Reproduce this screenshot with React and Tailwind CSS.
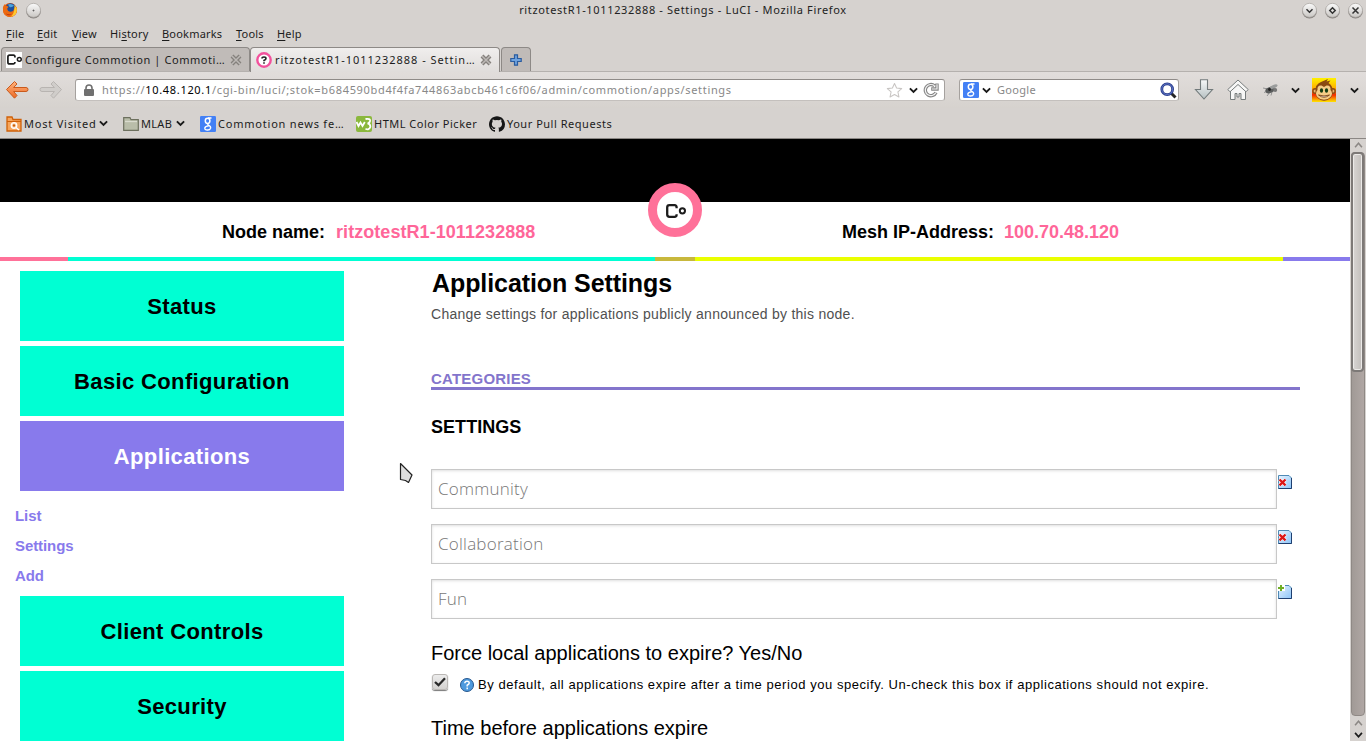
import React from 'react';

const Chevron = ({ className = 'h-[7px] w-[9px]' }) => (
  <svg viewBox="0 0 10 7" className={`shrink-0 ${className}`} fill="none" stroke="#1a1a1a" strokeWidth="2.1">
    <path d="M1 1.2 L5 5.2 L9 1.2" />
  </svg>
);

const WindowButton = ({ children }) => (
  <svg viewBox="0 0 17 17" className="h-[17px] w-[17px] shrink-0">
    <circle cx="8.5" cy="9" r="7.4" fill="#85817e" />
    <circle cx="8.5" cy="8.3" r="7" fill="url(#btn)" stroke="#aaa6a2" strokeWidth=".7" />
    <g fill="none" stroke="#333" strokeWidth="1.5">{children}</g>
  </svg>
);

const Defs = () => (
  <svg className="absolute h-0 w-0">
    <defs>
      <linearGradient id="btn" x1="0" y1="0" x2="0" y2="1">
        <stop offset="0" stopColor="#fafafa" />
        <stop offset="1" stopColor="#cac7c4" />
      </linearGradient>
      <linearGradient id="orange" x1="0" y1="0" x2="0" y2="1">
        <stop offset="0" stopColor="#ffb27c" />
        <stop offset="1" stopColor="#ee6a25" />
      </linearGradient>
      <linearGradient id="sheet" x1="0" y1="0" x2="1" y2="1">
        <stop offset="0" stopColor="#e8f4ff" />
        <stop offset="1" stopColor="#8cc4f8" />
      </linearGradient>
      <linearGradient id="sky" x1="0" y1="0" x2="0" y2="1">
        <stop offset="0" stopColor="#fff200" />
        <stop offset=".4" stopColor="#ffb400" />
        <stop offset=".7" stopColor="#f22a00" />
        <stop offset="1" stopColor="#ffe600" />
      </linearGradient>
      <linearGradient id="silver" x1="0" y1="0" x2="0" y2="1">
        <stop offset="0" stopColor="#f6f8f8" />
        <stop offset="1" stopColor="#b6c0c2" />
      </linearGradient>
    </defs>
  </svg>
);

const Firefox = () => (
  <svg viewBox="0 0 16 16" className="h-4 w-4 shrink-0">
    <circle cx="8" cy="8" r="7" fill="#e8590c" />
    <circle cx="8.6" cy="6.4" r="5.2" fill="#1d4f9c" />
    <path d="M6 2.5 Q9 1 12 3.5 Q10 6 7.5 5Z" fill="#4aa3dd" />
    <path d="M1 5 Q2 2.5 3 2 L3.6 4 Q5.5 3.6 6.6 4.8 L5.2 6.6 Q5.6 10 9 9.8 Q12 9 12.3 6.5 L14.8 5 Q16 11 11.5 14 Q6 16.5 2.5 12.5 Q.6 9.5 1 5Z" fill="#ec6a12" />
    <path d="M12.4 3 Q16.4 7 13.8 12 Q11.5 14.8 8.5 14.8 Q13 11.5 12.4 3Z" fill="#fdc92e" />
    <path d="M3.5 11 Q6 13.5 10 12 Q6 14.8 3.5 11Z" fill="#b3240c" />
  </svg>
);

const CommotionMark = ({ className }) => (
  <svg viewBox="0 0 20 14" className={className} fill="none" stroke="#1c1c1c">
    <path d="M10.6 4.3 V3.2 Q10.6 1.2 8.6 1.2 H3.5 Q1.2 1.2 1.2 3.5 V10.5 Q1.2 12.8 3.5 12.8 H8.6 Q10.6 12.8 10.6 10.8 V10.2" strokeWidth="2.3" />
    <circle cx="16.4" cy="6.8" r="2.6" strokeWidth="2" />
  </svg>
);

const TabClose = () => (
  <svg viewBox="0 0 12 12" className="h-3 w-3 shrink-0">
    <path d="M2 2 L10 10 M10 2 L2 10" stroke="#85817d" strokeWidth="4" />
    <path d="M2 2 L10 10 M10 2 L2 10" stroke="#bdb9b6" strokeWidth="1.5" />
  </svg>
);

const GoogleG = () => (
  <svg viewBox="0 0 16 16" className="h-4 w-4 shrink-0">
    <rect width="16" height="16" rx="1.2" fill="#4380f5" />
    <g fill="none" stroke="#fff" strokeWidth="1.5">
      <ellipse cx="7.6" cy="4.8" rx="2.3" ry="2.6" />
      <path d="M8 2 H11.5 M8.3 7.4 Q7 8.6 8.8 9.3 Q11 10.3 10.6 12.2 Q9.8 14.2 7.4 14 Q4.6 13.8 4.8 12 Q5.2 10 8.8 9.8" strokeWidth="1.3" />
    </g>
  </svg>
);

const MenuItem = ({ first, pre = '', rest, width }) => (
  <span className={`${width} shrink-0`}>
    {pre}
    <span className="underline underline-offset-2">{first}</span>
    {rest}
  </span>
);

const NavButton = ({ label, active }) => (
  <a className={`ml-5 flex h-[70px] w-[324px] items-center justify-center pt-[2px] text-[22px] font-bold tracking-[0.36px] ${active ? 'bg-[#887aec] text-white' : 'bg-[#00ffd3] text-black'}`}>
    {label}
  </a>
);

const RemoveIcon = () => (
  <svg viewBox="0 0 14 14" className="mt-[6px] h-[14px] w-[14px] shrink-0">
    <path d="M.5 .5 H11 L13.5 3 V13.5 H.5Z" fill="url(#sheet)" stroke="#4f8ab5" />
    <path d="M13.5 3 V13.5 H.5" fill="none" stroke="#1f3f70" />
    <path d="M1.5 4.5 L7.5 10.3 M7.5 4.5 L1.5 10.3" stroke="#fff" strokeWidth="3.6" />
    <path d="M1.5 4.5 L7.5 10.3 M7.5 4.5 L1.5 10.3" stroke="#dc1616" strokeWidth="2.4" />
  </svg>
);

const AddIcon = () => (
  <svg viewBox="0 0 14 14" className="mt-[6px] h-[14px] w-[14px] shrink-0">
    <path d="M.5 .5 H11 L13.5 3 V13.5 H.5Z" fill="url(#sheet)" stroke="#4f8ab5" />
    <path d="M13.5 3 V13.5 H.5" fill="none" stroke="#1f3f70" />
    <path d="M0 0 H7 V6 H0Z" fill="#fff" />
    <path d="M3 0 V6 M0 3 H6" stroke="#6fae24" strokeWidth="2" />
  </svg>
);

const Field = ({ value, icon }) => (
  <div className="mb-[15px] flex h-10 items-start gap-px">
    <div className="flex h-10 w-[846px] items-center border border-[#c8c8c8] pl-[6px] font-['Open_Sans',sans-serif] text-[17px] font-light tracking-[0.23px] text-[#777] shadow-[inset_0_1px_3px_rgba(0,0,0,0.13)]">
      {value}
    </div>
    {icon}
  </div>
);

const TitleBar = () => (
  <div className="grid h-5 grid-cols-[100px_1fr_100px] items-center text-[#222]">
    <div className="flex items-center gap-[7px] pl-[2px]">
      <Firefox />
      <WindowButton><circle cx="8.5" cy="8.5" r=".5" strokeWidth=".8" /></WindowButton>
    </div>
    <div className="pb-px text-center tracking-[0.66px]">ritzotestR1-1011232888 - Settings - LuCI - Mozilla Firefox</div>
    <div className="flex items-center justify-end gap-[6px] pr-[2px]">
      <WindowButton><path d="M5.5 7.2 L8.5 10.2 L11.5 7.2" /></WindowButton>
      <WindowButton><path d="M8.5 5.8 L11.2 8.5 L8.5 11.2 L5.8 8.5Z" /></WindowButton>
      <WindowButton><path d="M5.5 5.5 L11.5 11.5 M11.5 5.5 L5.5 11.5" /></WindowButton>
    </div>
  </div>
);

const Tabs = () => (
  <div className="flex h-[25px] items-end border-b border-[#b5b1ae] pl-px">
    <div className="flex h-6 w-[249px] items-center rounded-t-[4px] border border-b-0 border-[#8d8986] bg-[#c0bbb8] pl-[4px]">
      <span className="mr-[3px] flex h-4 w-4 items-center justify-center bg-white">
        <CommotionMark className="h-[11px] w-[15px]" />
      </span>
      <span className="w-[205px] shrink-0 tracking-[0.57px]">Configure Commotion | Commoti…</span>
      <TabClose />
    </div>
    <div className="-mb-px flex h-[25px] w-[250px] items-center rounded-t-[4px] border border-b-0 border-[#8d8986] bg-linear-to-b from-[#f0eeed] to-[#e0dddb] pl-[5px]">
      <svg viewBox="0 0 16 16" className="mr-[3px] h-4 w-4 shrink-0">
        <circle cx="8" cy="8" r="6.7" fill="#fff" stroke="#f2519c" strokeWidth="2.4" />
        <path d="M6 6.6 Q6 5 8 5 Q10 5 10 6.5 Q10 7.6 8 8.4 V9.2 M8 10.2 V11.8" fill="none" stroke="#222" strokeWidth="1.6" />
      </svg>
      <span className="w-[205px] shrink-0 tracking-[0.96px]">ritzotestR1-1011232888 - Settin…</span>
      <TabClose />
    </div>
    <div className="ml-px flex h-6 w-[30px] items-center justify-center rounded-t-[4px] border border-b-0 border-[#8d8986] bg-[#c0bbb8]">
      <svg viewBox="0 0 12 12" className="h-3 w-3">
        <path d="M4.5 .8 H7.5 V4.5 H11.2 V7.5 H7.5 V11.2 H4.5 V7.5 H.8 V4.5 H4.5Z" fill="#6ea2de" stroke="#2a5b9e" strokeWidth="1.2" />
      </svg>
    </div>
  </div>
);

const NavBar = () => (
  <div className="flex h-[36px] items-center bg-linear-to-b from-[#e1dddb] to-[#d6d2ce] pl-[5px]">
    <svg viewBox="0 0 24 20" className="h-5 w-6 shrink-0">
      <path d="M1.5 9.5 L9.5 1.5 L12 4 L8.6 7.5 H21 Q23 7.5 23 9.5 Q23 11.5 21 11.5 H8.6 L12 15.5 L9.5 18.2Z" fill="url(#orange)" stroke="#c95a1c" strokeWidth="1" strokeLinejoin="round" />
    </svg>
    <svg viewBox="0 0 24 20" className="ml-[10px] h-5 w-6 shrink-0">
      <path d="M22.5 9.5 L14.5 1.5 L12 4 L15.4 7.5 H3 Q1 7.5 1 9.5 Q1 11.5 3 11.5 H15.4 L12 15.5 L14.5 18.2Z" fill="#d0cdca" stroke="#b8b4b1" strokeWidth="1" strokeLinejoin="round" />
    </svg>
    <div className="ml-[12px] flex h-[22px] w-[870px] shrink-0 items-center rounded-[3px] border border-t-[#8f8b88] border-r-[#a5a19e] border-b-[#c4c0bd] border-l-[#a5a19e] bg-white pl-2">
      <svg viewBox="0 0 10 12" className="h-3 w-[10px] shrink-0">
        <rect y="5" width="10" height="7" rx="1" fill="#707070" />
        <path d="M2 6 V4 Q2 1 5 1 Q8 1 8 4 V6" fill="none" stroke="#707070" strokeWidth="1.6" />
      </svg>
      <span className="ml-2 w-[784px] shrink-0 tracking-[0.675px] text-[#888]">
        https://<span className="text-black">10.48.120.1</span>/cgi-bin/luci/;stok=b684590bd4f4fa744863abcb461c6f06/admin/commotion/apps/settings
      </span>
      <svg viewBox="0 0 18 18" className="h-[17px] w-[17px] shrink-0">
        <path d="M9 1.5 L11.2 6.4 L16.6 7 L12.6 10.5 L13.7 15.8 L9 13.2 L4.3 15.8 L5.4 10.5 L1.4 7 L6.8 6.4Z" fill="#fff" stroke="#c8c5c3" strokeWidth="1.1" strokeLinejoin="round" />
      </svg>
      <Chevron className="ml-[6px] h-[7px] w-[9px]" />
      <svg viewBox="0 0 16 16" className="ml-[5px] h-4 w-4 shrink-0" fill="none">
        <path d="M11.5 3.8 A5.6 5.6 0 1 0 13 10.5 M14 1.5 V7 H8.2" stroke="#858585" strokeWidth="3.4" />
        <path d="M11.5 3.8 A5.6 5.6 0 1 0 12.8 10.8 M14 2.3 V7 H9" stroke="#f2f2f2" strokeWidth="1.2" />
      </svg>
    </div>
    <div className="ml-[14px] flex h-[22px] w-[220px] shrink-0 items-center rounded-[3px] border border-t-[#8f8b88] border-r-[#a5a19e] border-b-[#c4c0bd] border-l-[#a5a19e] bg-white pl-[3px]">
      <GoogleG />
      <Chevron className="ml-[3px] h-[7px] w-[9px]" />
      <span className="ml-[6px] w-[163px] shrink-0 tracking-[0.3px] text-[#888]">Google</span>
      <svg viewBox="0 0 17 17" className="h-[17px] w-[17px] shrink-0">
        <path d="M11 11 L15.5 15.5" stroke="#262626" strokeWidth="3" />
        <circle cx="7.2" cy="7.2" r="5.4" fill="#fff" stroke="#2b3f8f" strokeWidth="2.8" />
        <circle cx="7.2" cy="7.2" r="5.4" fill="none" stroke="#6b80cd" strokeWidth=".8" />
      </svg>
    </div>
    <svg viewBox="0 0 20 22" className="ml-[15px] h-[22px] w-5 shrink-0">
      <path d="M6.5 .8 H13.5 V10.5 H18.5 L10 20 L1.5 10.5 H6.5Z" fill="url(#silver)" stroke="#727a7b" strokeWidth="1.1" />
    </svg>
    <svg viewBox="0 0 22 22" className="ml-[13px] h-[22px] w-[22px] shrink-0" fill="#f7f7f6" stroke="#777c7c" strokeWidth="1" strokeLinejoin="round">
      <path d="M3.5 11 V20.5 H8 V14.500 H10 V18 H12 V14.500 H14 V20.5 H18.5 V11 L11 4.5Z" />
      <path d="M11 1 L21.2 10.5 L19 12.8 L11 5.5 L3 12.8 L.8 10.5Z" />
    </svg>
    <svg viewBox="0 0 17 14" className="ml-[13px] h-[14px] w-[17px] shrink-0">
      <path d="M1 5 L6 6 M2 9.5 L6 8 M5 13 L8 9 M9 12.5 L10 9" stroke="#8c8c8c" strokeWidth=".9" />
      <ellipse cx="8" cy="7" rx="4.8" ry="3" transform="rotate(-20 8 7)" fill="#5a5c5c" />
      <ellipse cx="11.8" cy="3.6" rx="4" ry="1.8" transform="rotate(-22 11.8 3.6)" fill="#9a9c9c" />
      <circle cx="13.2" cy="7" r="2" fill="#777" />
      <circle cx="7.5" cy="6.5" r="1.4" fill="#222" />
    </svg>
    <Chevron className="ml-[12px] h-[7px] w-[9px]" />
    <svg viewBox="0 0 24 24" className="ml-[12px] h-6 w-6 shrink-0">
      <rect width="24" height="24" fill="url(#sky)" />
      <circle cx="3.2" cy="13" r="3" fill="#8b4a12" />
      <circle cx="20.8" cy="13" r="3" fill="#8b4a12" />
      <circle cx="3.2" cy="13" r="1.6" fill="#eab26d" />
      <circle cx="20.8" cy="13" r="1.6" fill="#eab26d" />
      <path d="M3.5 14 Q3 6 9 4 L16 1 L14.5 3.5 L18.5 2.5 L16.5 5 Q21.5 8 20.5 15 Q20 22 12 22.8 Q4 22 3.5 14Z" fill="#8b4a12" />
      <path d="M5.5 12 Q5 7 9.5 7.5 L12 9 L14.5 7.5 Q19 7 18.5 12 Q21.5 15.5 18.5 19 Q16 21.8 12 21.8 Q8 21.8 5.5 19 Q2.5 15.5 5.5 12Z" fill="#f5cd88" />
      <ellipse cx="9.5" cy="12.5" rx="1.6" ry="2.2" fill="#123c12" />
      <ellipse cx="14.5" cy="12.5" rx="1.6" ry="2.2" fill="#123c12" />
      <path d="M6.5 17 Q12 21.5 17.5 17 Q12 19 6.5 17Z" fill="#fff" stroke="#6b3208" strokeWidth=".8" />
    </svg>
    <Chevron className="ml-[14px] h-[7px] w-[9px]" />
  </div>
);

const Bookmarks = () => (
  <div className="flex h-[31px] items-center border-b border-[#8b8784] pt-px pl-[6px]">
    <svg viewBox="0 0 16 16" className="mr-[2px] h-4 w-4 shrink-0">
      <path d="M1 1 H6 L7 3.5 H15 V15 H1Z" fill="#f7a55b" stroke="#cf6008" strokeWidth="1.3" />
      <path d="M1 5.5 H15" stroke="#cf6008" />
      <circle cx="8" cy="9.5" r="2.8" fill="#fbd9b5" stroke="#fff" strokeWidth="1.2" />
      <circle cx="8" cy="9.5" r="1.2" fill="#cf6008" />
      <path d="M10 11.5 L13 14" stroke="#fff" strokeWidth="1.5" />
    </svg>
    <span className="w-[75px] shrink-0 tracking-[0.78px]">Most Visited</span>
    <Chevron />
    <svg viewBox="0 0 16 14" className="mr-[2px] ml-[15px] h-[14px] w-4 shrink-0">
      <path d="M.7 .7 H7 L8 2.7 H15.3 V13.3 H.7Z" fill="#b9bda9" stroke="#6d705e" strokeWidth="1.2" />
      <path d="M2 4.5 H14" stroke="#dadccf" strokeWidth="1.3" />
    </svg>
    <span className="w-[35px] shrink-0 tracking-[0.3px]">MLAB</span>
    <Chevron />
    <span className="mr-[2px] ml-[15px] flex"><GoogleG /></span>
    <span className="w-[138px] shrink-0 tracking-[0.79px]">Commotion news fe…</span>
    <svg viewBox="0 0 16 16" className="mr-[2px] h-4 w-4 shrink-0">
      <rect width="16" height="16" rx="2" fill="#8bb83d" />
      <path d="M.5 6 L2.5 10 L4.5 6.5 L6.5 10 L8.8 6 M9.5 3 Q14.5 2.2 14 5 Q13.5 7.3 11.5 7.4 Q14.6 8 14.3 11 Q13 14.5 9.5 12.7" fill="none" stroke="#fff" strokeWidth="1.8" />
    </svg>
    <span className="w-[115px] shrink-0 tracking-[0.5px]">HTML Color Picker</span>
    <svg viewBox="0 0 24 24" className="mr-[2px] h-4 w-4 shrink-0" fill="#161616">
      <path d="M12 .3C5.4.3 0 5.7 0 12.3c0 5.3 3.4 9.8 8.2 11.4.6.1.8-.3.8-.6v-2.2c-3.3.7-4-1.4-4-1.4-.6-1.4-1.4-1.8-1.4-1.8-1-.7.1-.7.1-.7 1.2.1 1.8 1.2 1.8 1.2 1.1 1.8 2.8 1.3 3.5 1 .1-.8.4-1.3.8-1.6-2.7-.3-5.5-1.3-5.5-5.9 0-1.3.5-2.4 1.2-3.2-.1-.3-.5-1.5.1-3.2 0 0 1-.3 3.3 1.2a11.5 11.5 0 0 1 6 0C17.200 5 18.200 5.300 18.200 5.300c.7 1.700.3 2.900.1 3.200.8.800 1.200 1.900 1.200 3.200 0 4.600-2.800 5.600-5.500 5.900.4.400.8 1.100.8 2.200v3.300c0 .3.200.700.8.600A12 12 0 0 0 24 12.300C24 5.700 18.600.3 12 .3Z" />
    </svg>
    <span className="tracking-[0.52px]">Your Pull Requests</span>
  </div>
);

const Scrollbar = () => (
  <div className="flex w-4 shrink-0 flex-col items-center bg-[#d6d2cf]">
    <svg viewBox="0 0 10 7" className="mt-[3px] mb-[4px] h-[6px] w-[9px] shrink-0" fill="none" stroke="#8b8784" strokeWidth="1.8"><path d="M1 6 L5 1.500 L9 6" /></svg>
    <div className="flex h-[564px] w-[14px] shrink-0 flex-col rounded-[4px] border border-[#8f8985] bg-linear-to-r from-[#a19a96] to-[#b0a7a4]">
      <div className="-mx-px -mt-px h-[220px] w-[13px] rounded-[4px] border-2 border-[#7d7977] bg-linear-to-r from-[#d8d5d3] to-[#c2bebb] shadow-[inset_0_0_0_1px_#eceae8]" />
    </div>
    <svg viewBox="0 0 10 7" className="mt-[4px] h-[6px] w-[9px] shrink-0" fill="none" stroke="#8b8784" strokeWidth="1.800"><path d="M1 6 L5 1.500 L9 6" /></svg>
    <svg viewBox="0 0 10 7" className="mt-[6px] h-[6px] w-[9px] shrink-0" fill="none" stroke="#1a1a1a" strokeWidth="2"><path d="M1 1 L5 5.500 L9 1" /></svg>
  </div>
);

const SiteHeader = () => (
  <header className="relative">
    <div className="h-[63px] bg-black" />
    <div className="flex h-[55px] items-center pt-[4px] text-[18px] font-bold">
      <div className="w-[842px] pl-[222px]">
        <span className="inline-block w-[114px]">Node name:</span>
        <span className="tracking-[0.06px] text-[#ff6699]">ritzotestR1-1011232888</span>
      </div>
      <div>
        <span className="inline-block w-[162px]">Mesh IP-Address:</span>
        <span className="text-[#ff6699]">100.70.48.120</span>
      </div>
    </div>
    <div className="flex h-1">
      <div className="w-[68px] bg-[#ff7199]" />
      <div className="w-[587px] bg-[#00ffd3]" />
      <div className="w-10 bg-[#c8b83c]" />
      <div className="w-[588px] bg-[#eaff00]" />
      <div className="flex-1 bg-[#887aec]" />
    </div>
    <div className="absolute top-[44px] left-[648px] flex h-[54px] w-[54px] items-center justify-center rounded-full border-[9px] border-[#ff7199] bg-white">
      <CommotionMark className="mt-[2px] ml-[1px] h-[14px] w-5" />
    </div>
  </header>
);

const Sidebar = () => (
  <nav className="flex w-[431px] shrink-0 flex-col gap-[5px] pt-[10px]">
    <NavButton label="Status" />
    <NavButton label="Basic Configuration" />
    <NavButton label="Applications" active />
    <ul className="mt-[5px] pl-[15px] text-[15px] font-bold tracking-[-0.08px] text-[#887aec]">
      <li className="h-[30px] leading-[30px]">List</li>
      <li className="h-[30px] leading-[30px]">Settings</li>
      <li className="h-[30px] leading-[30px]">Add</li>
    </ul>
    <NavButton label="Client Controls" />
    <NavButton label="Security" />
  </nav>
);

const Content = () => (
  <main className="w-[869px] pt-[5px]">
    <h1 className="h-[34px] pl-px text-[25px] leading-[34px] font-bold tracking-[-0.08px]">Application Settings</h1>
    <p className="mt-[2px] h-6 text-[14px] leading-6 tracking-[0.27px] text-[#505050]">Change settings for applications publicly announced by this node.</p>
    <h2 className="mt-[43px] h-[21px] border-b-[3px] border-[#8375cc] text-[15px] leading-[19px] font-bold tracking-[0.2px] text-[#8375cc]">CATEGORIES</h2>
    <h3 className="mt-[27px] mb-[31px] h-[21px] text-[18px] leading-[21px] font-bold tracking-[0.05px]">SETTINGS</h3>
    <Field value="Community" icon={<RemoveIcon />} />
    <Field value="Collaboration" icon={<RemoveIcon />} />
    <Field value="Fun" icon={<AddIcon />} />
    <div className="mt-[20px] h-7 text-[20px] leading-7">Force local applications to expire? Yes/No</div>
    <div className="mt-[5px] flex h-[26px] items-start">
      <span className="mt-[2px] ml-[1px] flex h-4 w-4 items-center justify-center rounded-[3px] border border-[#bab7b4] bg-linear-to-b from-[#ececec] to-[#d4d2d0] shadow-[0_1px_1px_#777]">
        <svg viewBox="0 0 12 10" className="h-[10px] w-3" fill="none" stroke="#292929" strokeWidth="2.300"><path d="M1 5 L4.500 8.200 L11 1.200" /></svg>
      </span>
      <svg viewBox="0 0 14 14" className="mt-[6px] ml-[12px] h-[14px] w-[14px]">
        <circle cx="7" cy="7" r="6.500" fill="#4e9ade" stroke="#27588e" />
        <path d="M4.800 5.300 Q5 3.300 7 3.300 Q9.300 3.300 9.200 5.200 Q9 6.400 7.200 7.200 V8.500 M7.200 9.600 V11.200" stroke="#fff" strokeWidth="1.500" fill="none" />
      </svg>
      <span className="mt-[3px] ml-[4px] text-[13px] leading-[20px] tracking-[0.55px]">By default, all applications expire after a time period you specify. Un-check this box if applications should not expire.</span>
    </div>
    <div className="mt-[16px] h-7 text-[20px] leading-7">Time before applications expire</div>
  </main>
);

export default function App() {
  return (
    <div className="relative flex h-[741px] w-[1366px] flex-col overflow-hidden bg-[#d6d2cf] font-['Noto_Sans',sans-serif] text-[11px] leading-4 whitespace-nowrap text-[#1c1c1c]">
      <Defs />
      <TitleBar />
      <div className="flex h-[27px] items-center pl-[6px] tracking-[0.2px]">
        <MenuItem first="F" rest="ile" width="w-[31px]" />
        <MenuItem first="E" rest="dit" width="w-[35px]" />
        <MenuItem first="V" rest="iew" width="w-[38px]" />
        <MenuItem pre="Hi" first="s" rest="tory" width="w-[52px]" />
        <MenuItem first="B" rest="ookmarks" width="w-[74px]" />
        <MenuItem first="T" rest="ools" width="w-[41px]" />
        <MenuItem first="H" rest="elp" width="w-[40px]" />
      </div>
      <Tabs />
      <NavBar />
      <Bookmarks />
      <div className="flex min-h-0 flex-1">
        <div className="h-full w-[1350px] shrink-0 overflow-hidden bg-white font-['Liberation_Sans',Arial,sans-serif] text-black">
          <SiteHeader />
          <div className="flex">
            <Sidebar />
            <Content />
          </div>
        </div>
        <Scrollbar />
      </div>
      <svg viewBox="0 0 14 22" className="absolute top-[462px] left-[399px] h-[22px] w-[14px]">
        <path d="M1.500 1.500 L13 13 L9.500 20.500 L6.500 18.500 L1.500 17.500Z" fill="#dedede" stroke="#222" strokeWidth="1.200" strokeLinejoin="round" />
      </svg>
    </div>
  );
}
